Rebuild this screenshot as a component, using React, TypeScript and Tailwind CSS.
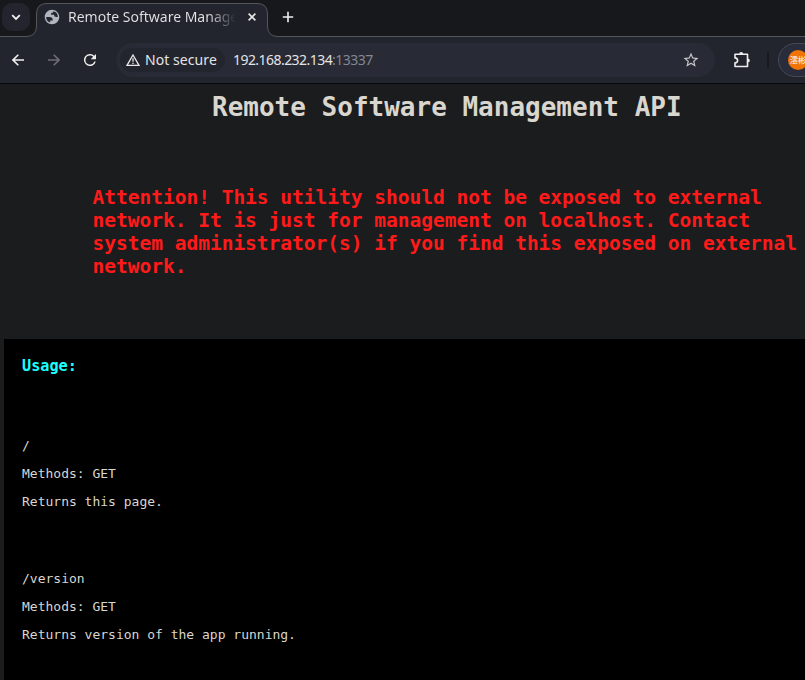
import React from 'react';

const ui = "font-['Noto_Sans','Open_Sans',sans-serif]";

function Tab() {
  return (
    <>
      <svg className="absolute left-0 top-0" width="805" height="38" viewBox="0 0 805 38" fill="none">
        <path d="M0 36.5H26Q36.5 36.5 36.5 26V14Q36.5 3.500 47 3.500H257Q267.500 3.500 267.500 14V26Q267.500 36.500 278 36.500H805V38H0Z" fill="#23252e" />
        <path d="M0 36.500H26Q36.500 36.500 36.500 26V14Q36.500 3.500 47 3.500H257Q267.500 3.500 267.500 14V26Q267.500 36.500 278 36.500H805" stroke="#55565a" />
      </svg>
      <div className="relative flex h-[34px] items-center">
        <button className="ml-[2px] flex h-7 w-7 items-center justify-center rounded-[10px] bg-[#23252e]" aria-label="Search tabs">
          <svg width="10" height="7" viewBox="0 0 10 7" fill="none" stroke="#f0f0f0" strokeWidth="1.800"><path d="M1.200 1.200 5 5 8.800 1.200" /></svg>
        </button>
        <svg className="ml-[14px]" width="16" height="16" viewBox="1 1 22 22" fill="#b0b5be">
          <path fillRule="evenodd" d="M12 2C6.480 2 2 6.480 2 12s4.480 10 10 10 10-4.480 10-10S17.520 2 12 2ZM4 12h4.400c3.400 0 4.900 1.600 4.600 4.900H9.500v2.700A8 8 0 0 1 4 12ZM14 4.250A8 8 0 0 1 20 12h-2c-2.100 0-3.100-1-3-3.100h-4.200V7c0-.7.300-1 1-1h1c.8 0 1.200-.5 1.200-1.750Z" />
        </svg>
        <span className="ml-2 w-[168px] whitespace-nowrap bg-gradient-to-r from-[#e4e4e6] from-[84%] to-[#23252e] bg-clip-text text-[14px] leading-6 text-transparent">Remote Software Manage</span>
        <svg className="ml-3" width="8" height="8" viewBox="0 0 8 8" stroke="#e8e8e8" strokeWidth="1.600"><path d="m.6.6 6.800 6.800M7.400.6.6 7.400" /></svg>
        <svg className="ml-[26px]" width="12" height="12" viewBox="0 0 12 12" stroke="#eee" strokeWidth="1.600"><path d="M6 .8v10.400M.8 6h10.400" /></svg>
      </div>
    </>
  );
}

function Toolbar() {
  return (
    <div className="relative flex h-[46px] items-center bg-[#23252e]">
      <svg className="ml-3 shrink-0" width="12" height="12" viewBox="0 0 12 12" fill="none" stroke="#eee" strokeWidth="1.600"><path d="M12 6H1M6.300.7 1 6l5.300 5.300" /></svg>
      <svg className="ml-6 shrink-0" width="12" height="12" viewBox="0 0 12 12" fill="none" stroke="#6d6e74" strokeWidth="1.600"><path d="M0 6h11M5.700.7 11 6l-5.300 5.300" /></svg>
      <svg className="ml-6 shrink-0" width="12" height="12" viewBox="4 4 16 16" fill="#eee"><path d="M17.650 6.350A8 8 0 1 0 19.730 14h-2.080A6 6 0 1 1 12 6c1.660 0 3.140.69 4.220 1.780L13 11h7V4z" /></svg>
      <div className="ml-[20px] flex h-[34px] w-[599px] shrink-0 items-center rounded-full bg-[#282a35] pl-1 pr-[15px]">
        <div className="flex h-6 w-[105px] items-center rounded-full bg-[#23252e] pl-[6px]">
          <svg className="mr-[5px] shrink-0" width="14" height="12" viewBox="0 0 14 12" fill="none" stroke="#e9e9e9" strokeWidth="1.300"><path d="M7 1 13 11.300H1ZM7 4.200v3.600M7 8.800v1.200" /></svg>
          <span className="whitespace-nowrap text-[14px] leading-5 tracking-[.07px] text-[#e4e4e6]">Not secure</span>
        </div>
        <span className="ml-2 flex-1 whitespace-nowrap text-[14px] leading-5 tracking-[-.55px] text-[#e4e4e6]">192.168.232.134<span className="text-[#85868e]">:13337</span></span>
        <svg width="18" height="18" viewBox="0 0 24 24" fill="#c6c6c9"><path d="m22 9.240-7.190-.62L12 2 9.190 8.630 2 9.240l5.460 4.730L5.820 21 12 17.270 18.180 21l-1.630-7.030L22 9.240zM12 15.400l-3.760 2.270 1-4.280-3.320-2.880 4.380-.38L12 6.100l1.710 4.040 4.380.38-3.320 2.880 1 4.280L12 15.400z" /></svg>
      </div>
      <svg className="ml-[18px] shrink-0" width="18" height="18" viewBox="0 0 18 18" fill="none" stroke="#eee" strokeWidth="1.600" strokeLinejoin="round">
        <path d="M2 3.300H14.500V15.500H2V11.900Q4.600 11.600 4.600 9.400T2 6.900Z" />
        <path d="M6.200 3a2 2 0 0 1 4 0ZM14.900 7.500a1.900 1.900 0 0 1 0 3.800Z" fill="#eee" stroke="none" />
      </svg>
      <div className="ml-4 h-4 w-[2px] shrink-0 bg-[#171820]" />
      <div className="ml-[9px] flex h-[34px] w-[60px] shrink-0 items-center rounded-full border border-[#444954] bg-[#282c3b] pl-[9px]">
        <div className="flex h-5 w-5 items-center justify-center overflow-hidden rounded-full bg-[#f07506] font-['Noto_Sans_CJK_TC',sans-serif] text-[8px] leading-none text-white"><span className="whitespace-nowrap">澐彬</span></div>
      </div>
    </div>
  );
}

function Endpoint({ lines }: { lines: string[] }) {
  return <div>{lines.map((line) => <p key={line} className="h-[28px] text-[13px] leading-[15px]">{line}</p>)}</div>;
}

export default function App() {
  return (
    <div className="h-[680px] w-[805px] overflow-hidden bg-[#1b1c1e]">
      <header className={`relative h-[84px] overflow-hidden border-b border-[#08080c] bg-[#17181c] ${ui}`}>
        <Tab />
        <div className="h-[3px]" />
        <Toolbar />
      </header>
      <main className="font-['DejaVu_Sans_Mono',monospace] text-[#d9d6cf]">
        <h1 className="ml-[212px] pt-[8px] text-[26px] font-bold leading-[30px]">Remote Software Management API</h1>
        <h2 className="ml-[92.500px] mt-[64px] h-[153px] w-[712px] text-[19.500px] font-bold leading-[23px] text-[#ff1a1a]">Attention! This utility should not be exposed to external network. It is just for management on localhost. Contact system administrator(s) if you find this exposed on external network.</h2>
        <section className="ml-1 h-[341px] bg-black pl-[18px] pt-[18px]">
          <h3 className="h-[81px] text-[15.210px] font-bold leading-[18px] text-[#1affff]">Usage:</h3>
          <Endpoint lines={['/', 'Methods: GET', 'Returns this page.']} />
          <div className="h-[49px]" />
          <Endpoint lines={['/version', 'Methods: GET', 'Returns version of the app running.']} />
        </section>
      </main>
    </div>
  );
}
